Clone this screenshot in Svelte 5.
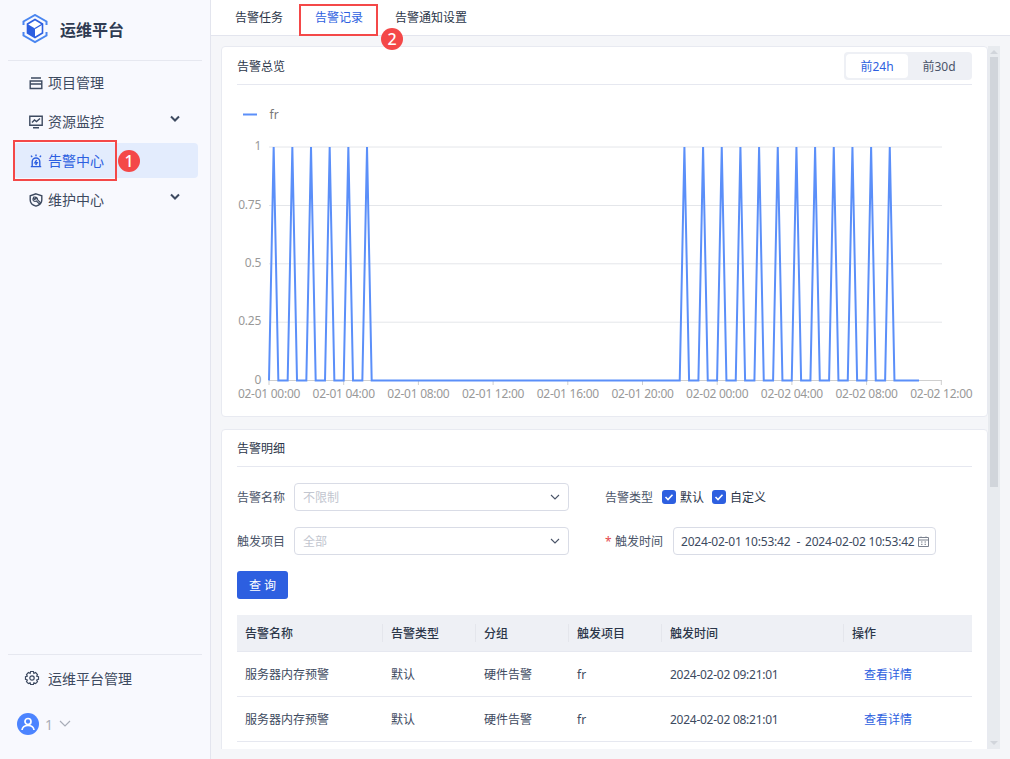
<script>
  const nav = [
    { label: '项目管理', icon: 'project' },
    { label: '资源监控', icon: 'monitor', arrow: true },
    { label: '告警中心', icon: 'alarm', active: true },
    { label: '维护中心', icon: 'maint', arrow: true }
  ];
  const tabs = ['告警任务', '告警记录', '告警通知设置'];
  const yTicks = [['1', 147], ['0.75', 205.5], ['0.5', 263.8], ['0.25', 322.2], ['0', 380.5]];
  const xLabels = ['02-01 00:00', '02-01 04:00', '02-01 08:00', '02-01 12:00', '02-01 16:00', '02-01 20:00', '02-02 00:00', '02-02 04:00', '02-02 08:00', '02-02 12:00'];
  const x0 = 268, hour = 18.67, top = 147, bottom = 380.5;
  const peaks = [0, 1, 2, 3, 4, 5, 22, 23, 24, 25, 26, 27, 28, 29, 30, 31, 32, 33];
  let points = [`${x0},${bottom}`];
  for (const k of peaks) {
    const p = x0 + hour / 4 + k * hour;
    points.push(`${(p - hour / 4).toFixed(2)},${bottom}`, `${p.toFixed(2)},${top}`, `${(p + hour / 4).toFixed(2)},${bottom}`);
  }
  points.push(`918,${bottom}`);
  const line = points.join(' ');
  const cols = ['告警名称', '告警类型', '分组', '触发项目', '触发时间', '操作'];
  const rows = ['2024-02-02 09:21:01', '2024-02-02 08:21:01'];
</script>

<div class="app">
  <aside class="side">
    <div class="brand">
      <svg width="28" height="30" viewBox="0 0 28 30">
        <path d="M2.5 11 V7.5 L14 1 L25.5 7.5 V11 M2.5 18 V21.5 L14 28 L25.5 21.5 V18" fill="none" stroke="#4a86f0" stroke-width="2"/>
        <path d="M14 5.5 L21.5 10 V19 L14 23.5 L6.5 19 V10 Z" fill="#fff" stroke="#2d5fe0" stroke-width="1.6"/>
        <path d="M6.5 10 L14 14.5 V23.5 L6.5 19 Z" fill="#2d5fe0"/>
        <path d="M21.5 10 L14 14.5" stroke="#2d5fe0" stroke-width="1.4"/>
      </svg>
      <span>运维平台</span>
    </div>
    <nav class="nav">
      {#each nav as item}
        <div class="nav-item" class:active={item.active}>
          <svg class="nav-icon" width="14" height="14" viewBox="0 0 14 14" fill="none" stroke="currentColor" stroke-width="1.4">
            {#if item.icon === 'project'}
              <path d="M2 2 H12 M1.2 5 H12.8 V12.5 H1.2 Z M1.2 8 H12.8" />
            {:else if item.icon === 'monitor'}
              <path d="M.8 1.2 H13.2 V10.2 H.8 Z M4 12.8 H10 M3 7.5 L5.5 5 L7.5 6.5 L11 3.5" />
            {:else if item.icon === 'alarm'}
              <path d="M3.2 12 V7.8 A3.8 3.8 0 0 1 10.8 7.8 V12 M1.8 12.6 H12.2 M7 .5 V2.2 M2 1.6 L3.2 3 M12 1.6 L10.8 3 M7.6 6 L5.9 8.8 H8.1 L6.6 11" />
            {:else}
              <path d="M7 .8 L12.8 2.8 V7 C12.8 10 10.5 12.2 7 13.2 C3.5 12.2 1.2 10 1.2 7 V2.8 Z" />
              <path d="M4.6 4.4 A2.8 2.8 0 0 0 4.4 7.6 A2.8 2.8 0 0 0 7.4 8 L10.4 11 L11.6 9.8 L8.6 6.8 A2.8 2.8 0 0 0 6 4 L7 5.8 L5.6 6.4 Z" stroke-width="1.2" />
            {/if}
          </svg>
          <span>{item.label}</span>
          {#if item.arrow}
            <svg class="nav-arrow" width="10" height="8" viewBox="0 0 10 8" fill="none" stroke="#3d4a60" stroke-width="2"><path d="M1 1.5 L5 5.5 L9 1.5"/></svg>
          {/if}
        </div>
      {/each}
    </nav>
    <div class="side-foot">
      <div class="admin">
        <svg width="16" height="16" viewBox="0 0 16 16" fill="none" stroke="#3d4a60" stroke-width="1.2">
          <path d="M6.6 1.5 H9.4 L9.9 3.3 L11.6 2.5 L13.5 4.5 L12.7 6.2 L14.5 6.8 V9.4 L12.7 10 L13.5 11.7 L11.6 13.6 L9.9 12.8 L9.4 14.5 H6.6 L6.1 12.8 L4.4 13.6 L2.5 11.7 L3.3 10 L1.5 9.4 V6.8 L3.3 6.2 L2.5 4.5 L4.4 2.5 L6.1 3.3 Z"/>
          <circle cx="8" cy="8" r="2.2"/>
        </svg>
        <span>运维平台管理</span>
      </div>
      <div class="user">
        <svg width="22" height="22" viewBox="0 0 22 22">
          <circle cx="11" cy="11" r="11" fill="#4c84ff"/>
          <circle cx="11" cy="8.5" r="3" fill="none" stroke="#fff" stroke-width="1.7"/>
          <path d="M5 17 C5.5 13.5 8 12.5 11 12.5 C14 12.5 16.5 13.5 17 17" fill="none" stroke="#fff" stroke-width="1.7"/>
        </svg>
        <span class="uid">1</span>
        <svg width="12" height="8" viewBox="0 0 12 8" fill="none" stroke="#a8adb8" stroke-width="1.2"><path d="M1 1 L6 6 L11 1"/></svg>
      </div>
    </div>
  </aside>

  <main class="main">
    <header class="tabs">
      {#each tabs as t, i}
        <div class="tab" class:on={i === 1}>{t}</div>
      {/each}
    </header>
    <div class="body">
      <div class="scroll">
        <section class="card chart-card">
          <div class="card-head">
            <span>告警总览</span>
            <div class="seg">
              <span class="seg-btn sel">前24h</span>
              <span class="seg-btn">前30d</span>
            </div>
          </div>
          <svg class="chart" width="766" height="332" viewBox="221 85 766 332">
            <line x1="242" x2="256" y1="114.5" y2="114.5" stroke="#5b8ff9" stroke-width="2"/>
            <text x="268.5" y="119" class="legend">fr</text>
            {#each yTicks as [label, y], i}
              <line x1="268" x2="941" y1={y} y2={y} stroke={i === 4 ? '#cfcfcf' : '#e4e6ea'} stroke-width="1"/>
              <text x="260" y={y + 3} text-anchor="end" class="axis">{label}</text>
            {/each}
            {#each xLabels as label, i}
              <line x1={x0 + i * 74.7} x2={x0 + i * 74.7} y1="381" y2="385" stroke="#cfcfcf"/>
              <text x={x0 + i * 74.7} y="398" text-anchor="middle" class="axis">{label}</text>
            {/each}
            <polyline points={line} fill="none" stroke="#5b8ff9" stroke-width="2"/>
          </svg>
        </section>

        <section class="card detail">
          <div class="detail-head">告警明细</div>
          <div class="form">
            <div class="field">
              <span class="lbl">告警名称</span>
              <div class="select">
                <span class="ph">不限制</span>
                <svg width="10" height="6" viewBox="0 0 10 6" fill="none" stroke="#4a5468" stroke-width="1.1"><path d="M1 1 L5 5 L9 1"/></svg>
              </div>
            </div>
            <div class="field">
              <span class="lbl">告警类型</span>
              <div class="checks">
                <span class="check"><svg width="14" height="14" viewBox="0 0 14 14"><rect width="14" height="14" rx="3" fill="#2d5fe0"/><path d="M3.5 7 L6 9.5 L10.5 4.8" fill="none" stroke="#fff" stroke-width="1.6"/></svg>默认</span>
                <span class="check"><svg width="14" height="14" viewBox="0 0 14 14"><rect width="14" height="14" rx="3" fill="#2d5fe0"/><path d="M3.5 7 L6 9.5 L10.5 4.8" fill="none" stroke="#fff" stroke-width="1.6"/></svg>自定义</span>
              </div>
            </div>
            <div class="field">
              <span class="lbl">触发项目</span>
              <div class="select">
                <span class="ph">全部</span>
                <svg width="10" height="6" viewBox="0 0 10 6" fill="none" stroke="#4a5468" stroke-width="1.1"><path d="M1 1 L5 5 L9 1"/></svg>
              </div>
            </div>
            <div class="field">
              <span class="star">*</span>
              <span class="lbl">触发时间</span>
              <div class="range">
                <span>2024-02-01 10:53:42</span>
                <span class="dash">-</span>
                <span>2024-02-02 10:53:42</span>
                <svg width="11" height="11" viewBox="0 0 11 11" fill="none" stroke="#7a818e" stroke-width="1"><path d="M.5 1.5 H10.5 V10.5 H.5 Z M.5 4 H10.5 M3 .5 V2 M8 .5 V2 M3 6 H4.5 M6.5 6 H8 M3 8.3 H4.5 M6.5 8.3 H8"/></svg>
              </div>
            </div>
          </div>
          <button class="query">查 询</button>
          <div class="table">
            <div class="tr th">
              {#each cols as c}<div class="cell"><span>{c}</span></div>{/each}
            </div>
            {#each rows as time}
              <div class="tr">
                <div class="cell">服务器内存预警</div>
                <div class="cell">默认</div>
                <div class="cell">硬件告警</div>
                <div class="cell">fr</div>
                <div class="cell time">{time}</div>
                <div class="cell link">查看详情</div>
              </div>
            {/each}
          </div>
        </section>
      </div>
      <div class="scrollbar">
        <i class="arrow up"></i>
        <div class="thumb"></div>
        <i class="arrow down"></i>
      </div>
    </div>
  </main>

  <div class="mark mark1"></div>
  <div class="dot dot1">1</div>
  <div class="mark mark2"></div>
  <div class="dot dot2">2</div>
</div>

<style>
  :global(body) { margin: 0; }
  .app {
    position: relative;
    display: flex;
    width: 1010px;
    height: 759px;
    overflow: hidden;
    font-family: "Noto Sans", "Noto Sans CJK SC", sans-serif;
    font-size: 12px;
    color: #2b3649;
  }
  .side {
    box-sizing: border-box;
    width: 211px;
    flex: none;
    display: flex;
    flex-direction: column;
    background: #f8f9fe;
    border-right: 1px solid #e3e5ee;
  }
  .brand {
    box-sizing: border-box;
    height: 61px;
    margin: 0 8px;
    padding: 0 0 2px 13px;
    display: flex;
    align-items: center;
    gap: 10px;
    border-bottom: 1px solid #e6e8f0;
    font-size: 16px;
    font-weight: 700;
    color: #2f3b52;
  }
  .brand span { margin-left: 1px; }
  .nav { padding: 4px 12px 0 14px; flex: 1; }
  .nav-item {
    height: 35px;
    margin-bottom: 4px;
    padding-left: 15px;
    display: flex;
    align-items: center;
    gap: 5px;
    font-size: 14px;
    line-height: 1;
    color: #3d4a60;
    border-radius: 4px;
  }
  .nav-item.active { background: #e3ecfd; color: #2d5fe0; }
  .nav-icon { flex: none; }
  .nav-arrow { margin-left: 61px; margin-top: -6px; }
  .side-foot { margin: 0 8px; border-top: 1px solid #e6e8f0; height: 104px; }
  .admin {
    margin-top: 13px;
    padding-left: 16px;
    height: 20px;
    display: flex;
    align-items: center;
    gap: 8px;
    font-size: 14px;
    color: #3d4a60;
  }
  .user {
    margin-top: 25px;
    padding-left: 9px;
    display: flex;
    align-items: center;
    gap: 6px;
  }
  .uid { font-size: 14px; color: #a8adb8; }
  .main { flex: 1; display: flex; flex-direction: column; min-width: 0; background: #f5f6f9; }
  .tabs {
    box-sizing: border-box;
    height: 36px;
    flex: none;
    padding-left: 24px;
    display: flex;
    align-items: center;
    gap: 32px;
    background: #fff;
    border-bottom: 1px solid #e3e5ee;
    color: #2b3649;
    padding-bottom: 1px;
  }
  .tab.on { color: #2d5fe0; }
  .body {
    flex: 1;
    min-height: 0;
    display: flex;
    padding: 10px 10px 10px 10px;
  }
  .scroll { flex: 1; min-width: 0; overflow: hidden; }
  .card {
    box-sizing: border-box;
    background: #fff;
    border: 1px solid #e8eaf1;
    border-radius: 4px;
    width: 767px;
  }
  .chart-card { height: 371px; }
  .card-head {
    box-sizing: border-box;
    height: 38px;
    margin: 0 15px;
    padding-top: 1px;
    display: flex;
    align-items: center;
    justify-content: space-between;
    border-bottom: 1px solid #e6e8f0;
  }
  .seg {
    box-sizing: border-box;
    width: 128px;
    height: 28px;
    padding: 2px;
    display: flex;
    background: #eef0f5;
    border-radius: 4px;
  }
  .seg-btn {
    flex: 1;
    display: flex;
    align-items: center;
    justify-content: center;
    color: #4a5468;
    border-radius: 4px;
  }
  .seg-btn.sel { background: #fff; color: #2d5fe0; }
  .chart { display: block; }
  .axis { font-size: 12px; fill: #999; letter-spacing: -0.27px; }
  .legend { font-size: 12px; fill: #777; }
  .detail { margin-top: 12px; padding: 0 15px 16px; }
  .detail-head {
    height: 37px;
    box-sizing: border-box;
    display: flex;
    align-items: center;
    border-bottom: 1px solid #e6e8f0;
  }
  .form {
    display: grid;
    grid-template-columns: 332px 1fr;
    column-gap: 36px;
    row-gap: 16px;
    margin-top: 16px;
  }
  .field { display: flex; align-items: center; height: 28px; }
  .lbl { color: #4a5468; margin-right: 9px; flex: none; }
  .star { color: #e5484d; width: 10px; flex: none; }
  .select {
    box-sizing: border-box;
    width: 275px;
    height: 28px;
    padding: 0 8px;
    display: flex;
    align-items: center;
    justify-content: space-between;
    border: 1px solid #d9dce6;
    border-radius: 4px;
  }
  .ph { color: #c2c6cf; }
  .checks { display: flex; gap: 8px; }
  .check { display: flex; align-items: center; gap: 4px; color: #2b3649; }
  .range {
    box-sizing: border-box;
    width: 263px;
    height: 28px;
    margin-left: 1px;
    padding: 0 3px 0 7px;
    display: flex;
    align-items: center;
    border: 1px solid #d9dce6;
    border-radius: 4px;
    white-space: nowrap;
    letter-spacing: -0.21px;
    color: #3d4a60;
  }
  .dash { margin: 0 5px 0 6px; }
  .range svg { margin-left: 4px; flex: none; }
  .query {
    display: block;
    width: 51px;
    height: 28px;
    margin-top: 16px;
    padding: 0;
    border: 0;
    border-radius: 3px;
    background: #2d5fe0;
    color: #fff;
    font: inherit;
  }
  .table { margin-top: 16px; }
  .tr {
    display: grid;
    grid-template-columns: 146px 93px 93px 93px 182px 128px;
    height: 45px;
    box-sizing: border-box;
    align-items: center;
    border-bottom: 1px solid #e6e8f0;
    color: #3d4a60;
  }
  .cell { padding-left: 8px; white-space: nowrap; }
  .time { letter-spacing: -0.26px; }
  .th {
    height: 37px;
    background: #eef0f5;
    color: #2b3649;
    font-weight: 500;
  }
  .th .cell + .cell { border-left: 1px solid #e4e6ec; margin-left: -1px; }
  .link { color: #2d5fe0; padding-left: 20px; }
  .scrollbar {
    width: 12px;
    flex: none;
    background: #e8ebef;
    display: flex;
    flex-direction: column;
    align-items: center;
  }
  .arrow { width: 0; height: 0; border: 4px solid transparent; }
  .arrow.up { border-bottom-color: #d1d5db; border-top-width: 0; margin-top: 4px; }
  .arrow.down { border-top-color: #d1d5db; border-bottom-width: 0; margin-top: auto; margin-bottom: 4px; }
  .thumb { width: 8px; height: 430px; margin-top: 3px; background: #d1d5db; }
  .mark { position: absolute; box-sizing: border-box; border: 2px solid #f44848; }
  .mark1 { left: 13px; top: 140px; width: 104px; height: 41px; }
  .mark2 { left: 299px; top: 4px; width: 79px; height: 32px; }
  .dot {
    position: absolute;
    width: 22px;
    height: 22px;
    border-radius: 50%;
    background: #f44848;
    color: #fff;
    font-size: 16px;
    font-weight: 500;
    line-height: 22px;
    text-align: center;
  }
  .dot1 { left: 118px; top: 150px; }
  .dot2 { left: 381px; top: 28px; }
</style>
